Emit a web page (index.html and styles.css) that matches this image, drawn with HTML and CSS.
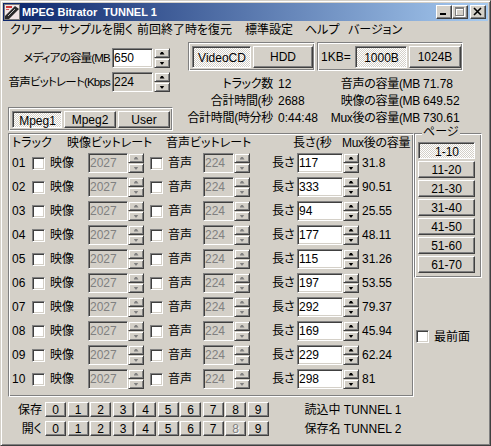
FILE: index.html
```html
<!DOCTYPE html>
<html lang="ja">
<head>
<meta charset="utf-8">
<title>MPEG Bitrator</title>
<link rel="stylesheet" href="styles.css">
</head>
<body>
<div class="window">
  <div class="titlebar">
    <svg class="app-icon" width="16" height="16" viewBox="0 0 16 16">
      <rect x="0.5" y="0.5" width="15" height="15" fill="#f2e6e6" stroke="#7a7a7a"/>
      <rect x="2" y="2" width="6" height="2" fill="#d03838"/>
      <rect x="2" y="5" width="3" height="1" fill="#d86060"/>
      <polygon points="1,12 11,2 15,5 5,15 1,15" fill="#2a2a2a"/>
      <line x1="4" y1="12" x2="11" y2="5" stroke="#bdbdbd" stroke-width="1"/>
    </svg>
    <span class="title">MPEG Bitrator  TUNNEL 1</span>
    <div class="caption-btns">
      <span class="cap"><svg width="14" height="12" viewBox="0 0 14 12"><rect x="3" y="7" width="6" height="2" fill="#000"/></svg></span>
      <span class="cap"><svg width="14" height="12" viewBox="0 0 14 12"><path d="M3 2h9v9h-9z M4 4v6h7v-6z" fill="#fff" fill-rule="evenodd"/><path d="M2 1h9v9h-9z M3 3v6h7v-6z" fill="#808080" fill-rule="evenodd"/></svg></span>
      <span class="cap close"><svg width="14" height="12" viewBox="0 0 14 12"><path d="M3 2 L10 9 M10 2 L3 9" stroke="#000" stroke-width="1.6"/></svg></span>
    </div>
  </div>

  <div class="menubar">
    <span class="m1">クリアー</span>
    <span class="m2">サンプルを開く</span>
    <span class="m3">前回終了時を復元</span>
    <span class="m4">標準設定</span>
    <span class="m5">ヘルプ</span>
    <span class="m6">バージョン</span>
  </div>

  <div class="top">
    <div class="top-left">
      <div class="field">
        <span class="field-label">メディアの容量(MB</span>
        <span class="edit w41">650</span>
        <span class="spin"><i class="up"></i><i class="dn"></i></span>
      </div>
      <div class="field">
        <span class="field-label">音声ビットレート(Kbps</span>
        <span class="edit w41 ro">224</span>
        <span class="spin"><i class="up"></i><i class="dn"></i></span>
      </div>
      <div class="etched mpeg-group">
        <span class="btn on w50">Mpeg1</span>
        <span class="btn w52">Mpeg2</span>
        <span class="btn w52">User</span>
      </div>
    </div>
    <div class="top-right">
      <div class="modes">
        <div class="etched group-vcd">
          <span class="btn on vcd">VideoCD</span>
          <span class="btn hdd">HDD</span>
        </div>
        <div class="etched group-kb">
          <span class="kb-label">1KB=</span>
          <span class="btn on w52">1000B</span>
          <span class="btn w52">1024B</span>
        </div>
      </div>
      <div class="stats">
        <span class="s-label">トラック数</span><span class="s-val">12</span>
        <span class="s-label">音声の容量(MB</span><span class="s-val2">71.78</span>
        <span class="s-label">合計時間(秒</span><span class="s-val">2688</span>
        <span class="s-label">映像の容量(MB</span><span class="s-val2">649.52</span>
        <span class="s-label">合計時間(時分秒</span><span class="s-val">0:44:48</span>
        <span class="s-label">Mux後の容量(MB</span><span class="s-val2">730.61</span>
      </div>
    </div>
  </div>

  <div class="middle">
    <div class="etched tracks">
      <div class="thead">
        <span class="h1">トラック</span>
        <span class="h2">映像ビットレート</span>
        <span class="h3">音声ビットレート</span>
        <span class="h4">長さ(秒</span>
        <span class="h5">Mux後の容量</span>
      </div>
      <div class="trow"><span class="num">01</span><span class="check"></span><span class="lbl-v">映像</span><span class="edit dis w40">2027</span><span class="spin dis"><i class="up"></i><i class="dn"></i></span><span class="check c2"></span><span class="lbl-a">音声</span><span class="edit dis w31">224</span><span class="spin dis"><i class="up"></i><i class="dn"></i></span><span class="lbl-l">長さ</span><span class="edit w46">117</span><span class="spin"><i class="up"></i><i class="dn"></i></span><span class="mux">31.8</span></div>
      <div class="trow"><span class="num">02</span><span class="check"></span><span class="lbl-v">映像</span><span class="edit dis w40">2027</span><span class="spin dis"><i class="up"></i><i class="dn"></i></span><span class="check c2"></span><span class="lbl-a">音声</span><span class="edit dis w31">224</span><span class="spin dis"><i class="up"></i><i class="dn"></i></span><span class="lbl-l">長さ</span><span class="edit w46">333</span><span class="spin"><i class="up"></i><i class="dn"></i></span><span class="mux">90.51</span></div>
      <div class="trow"><span class="num">03</span><span class="check"></span><span class="lbl-v">映像</span><span class="edit dis w40">2027</span><span class="spin dis"><i class="up"></i><i class="dn"></i></span><span class="check c2"></span><span class="lbl-a">音声</span><span class="edit dis w31">224</span><span class="spin dis"><i class="up"></i><i class="dn"></i></span><span class="lbl-l">長さ</span><span class="edit w46">94</span><span class="spin"><i class="up"></i><i class="dn"></i></span><span class="mux">25.55</span></div>
      <div class="trow"><span class="num">04</span><span class="check"></span><span class="lbl-v">映像</span><span class="edit dis w40">2027</span><span class="spin dis"><i class="up"></i><i class="dn"></i></span><span class="check c2"></span><span class="lbl-a">音声</span><span class="edit dis w31">224</span><span class="spin dis"><i class="up"></i><i class="dn"></i></span><span class="lbl-l">長さ</span><span class="edit w46">177</span><span class="spin"><i class="up"></i><i class="dn"></i></span><span class="mux">48.11</span></div>
      <div class="trow"><span class="num">05</span><span class="check"></span><span class="lbl-v">映像</span><span class="edit dis w40">2027</span><span class="spin dis"><i class="up"></i><i class="dn"></i></span><span class="check c2"></span><span class="lbl-a">音声</span><span class="edit dis w31">224</span><span class="spin dis"><i class="up"></i><i class="dn"></i></span><span class="lbl-l">長さ</span><span class="edit w46">115</span><span class="spin"><i class="up"></i><i class="dn"></i></span><span class="mux">31.26</span></div>
      <div class="trow"><span class="num">06</span><span class="check"></span><span class="lbl-v">映像</span><span class="edit dis w40">2027</span><span class="spin dis"><i class="up"></i><i class="dn"></i></span><span class="check c2"></span><span class="lbl-a">音声</span><span class="edit dis w31">224</span><span class="spin dis"><i class="up"></i><i class="dn"></i></span><span class="lbl-l">長さ</span><span class="edit w46">197</span><span class="spin"><i class="up"></i><i class="dn"></i></span><span class="mux">53.55</span></div>
      <div class="trow"><span class="num">07</span><span class="check"></span><span class="lbl-v">映像</span><span class="edit dis w40">2027</span><span class="spin dis"><i class="up"></i><i class="dn"></i></span><span class="check c2"></span><span class="lbl-a">音声</span><span class="edit dis w31">224</span><span class="spin dis"><i class="up"></i><i class="dn"></i></span><span class="lbl-l">長さ</span><span class="edit w46">292</span><span class="spin"><i class="up"></i><i class="dn"></i></span><span class="mux">79.37</span></div>
      <div class="trow"><span class="num">08</span><span class="check"></span><span class="lbl-v">映像</span><span class="edit dis w40">2027</span><span class="spin dis"><i class="up"></i><i class="dn"></i></span><span class="check c2"></span><span class="lbl-a">音声</span><span class="edit dis w31">224</span><span class="spin dis"><i class="up"></i><i class="dn"></i></span><span class="lbl-l">長さ</span><span class="edit w46">169</span><span class="spin"><i class="up"></i><i class="dn"></i></span><span class="mux">45.94</span></div>
      <div class="trow"><span class="num">09</span><span class="check"></span><span class="lbl-v">映像</span><span class="edit dis w40">2027</span><span class="spin dis"><i class="up"></i><i class="dn"></i></span><span class="check c2"></span><span class="lbl-a">音声</span><span class="edit dis w31">224</span><span class="spin dis"><i class="up"></i><i class="dn"></i></span><span class="lbl-l">長さ</span><span class="edit w46">229</span><span class="spin"><i class="up"></i><i class="dn"></i></span><span class="mux">62.24</span></div>
      <div class="trow"><span class="num">10</span><span class="check"></span><span class="lbl-v">映像</span><span class="edit dis w40">2027</span><span class="spin dis"><i class="up"></i><i class="dn"></i></span><span class="check c2"></span><span class="lbl-a">音声</span><span class="edit dis w31">224</span><span class="spin dis"><i class="up"></i><i class="dn"></i></span><span class="lbl-l">長さ</span><span class="edit w46">298</span><span class="spin"><i class="up"></i><i class="dn"></i></span><span class="mux">81</span></div>
    </div>
    <div class="pages-col">
      <div class="etched pages">
        <span class="legend">ページ</span>
        <span class="btn on pg">1-10</span>
        <span class="btn pg">11-20</span>
        <span class="btn pg">21-30</span>
        <span class="btn pg">31-40</span>
        <span class="btn pg">41-50</span>
        <span class="btn pg">51-60</span>
        <span class="btn pg">61-70</span>
      </div>
      <div class="topmost">
        <span class="check"></span>
        <span class="topmost-label">最前面</span>
      </div>
    </div>
  </div>

  <div class="bottom">
    <div class="slot-row">
      <span class="slot-label">保存</span>
      <div class="slot-btns">
        <span class="btn slot">0</span><span class="btn slot">1</span><span class="btn slot">2</span><span class="btn slot">3</span><span class="btn slot">4</span><span class="btn slot">5</span><span class="btn slot">6</span><span class="btn slot">7</span><span class="btn slot">8</span><span class="btn slot">9</span>
      </div>
      <span class="slot-status">読込中 TUNNEL 1</span>
    </div>
    <div class="slot-row">
      <span class="slot-label">開く</span>
      <div class="slot-btns">
        <span class="btn slot">0</span><span class="btn slot">1</span><span class="btn slot">2</span><span class="btn slot">3</span><span class="btn slot">4</span><span class="btn slot">5</span><span class="btn slot">6</span><span class="btn slot">7</span><span class="btn slot disabled">8</span><span class="btn slot">9</span>
      </div>
      <span class="slot-status">保存名 TUNNEL 2</span>
    </div>
  </div>
</div>
</body>
</html>
```

FILE: styles.css
```css
* { box-sizing: border-box; }
html, body { margin: 0; padding: 0; }
body {
  width: 491px;
  height: 446px;
  overflow: hidden;
  background: #d4d0c8;
  font-family: "Liberation Sans", "Noto Sans CJK JP", sans-serif;
  font-size: 12px;
  line-height: 14px;
  font-feature-settings: "palt" 1;
  color: #000;
}

.window {
  width: 491px;
  height: 446px;
  border: 1px solid;
  border-color: #d4d0c8 #404040 #404040 #d4d0c8;
  box-shadow: inset 1px 1px 0 #fff, inset -1px -1px 0 #808080;
  padding: 2px;
  background: #d4d0c8;
  display: flex;
  flex-direction: column;
}

/* title bar */
.titlebar {
  height: 18px;
  flex: none;
  display: flex;
  align-items: center;
  background: linear-gradient(to right, #0a246a, #a6caf0);
  color: #fff;
}
.app-icon { flex: none; margin-left: 1px; }
.title {
  margin-left: 2px;
  font-weight: bold;
  font-size: 11px;
  white-space: pre;
}
.caption-btns { margin-left: auto; margin-right: 2px; display: flex; }
.cap {
  width: 16px;
  height: 14px;
  background: #d4d0c8;
  border: 1px solid;
  border-color: #fff #404040 #404040 #fff;
  box-shadow: inset -1px -1px 0 #808080;
  display: block;
}
.cap svg { display: block; }
.cap.close { margin-left: 2px; }

/* menu */
.menubar {
  height: 18px;
  flex: none;
  display: flex;
  align-items: center;
  padding-left: 7px;
  white-space: nowrap;
}
.menubar span { flex: none; }
.m1 { width: 48px; }
.m2 { width: 79px; }
.m3 { width: 108px; }
.m4 { width: 60px; }
.m5 { width: 43px; }

/* common widgets */
.etched {
  border: 1px solid;
  border-color: #808080 #fff #fff #808080;
  box-shadow: inset 1px 1px 0 #fff, inset -1px -1px 0 #808080;
}
.btn {
  flex: none;
  background: #d4d0c8;
  border: 1px solid;
  border-color: #fff #404040 #404040 #fff;
  box-shadow: inset -1px -1px 0 #808080;
  display: flex;
  align-items: center;
  justify-content: center;
  white-space: nowrap;
}
.btn.on {
  border-color: #808080 #fff #fff #808080;
  box-shadow: inset 1px 1px 0 #404040;
  background: repeating-conic-gradient(#fff 0 25%, #d4d0c8 0 50%) 0 0 / 2px 2px;
  padding: 2px 0 0 1px;
}
.btn.disabled { color: #808080; text-shadow: 1px 1px 0 #fff; }

.edit {
  flex: none;
  height: 20px;
  background: #fff;
  border: 1px solid;
  border-color: #808080 #fff #fff #808080;
  box-shadow: inset 1px 1px 0 #404040, inset -1px -1px 0 #d4d0c8;
  padding-left: 1px;
  display: flex;
  align-items: center;
  white-space: nowrap;
  overflow: hidden;
}
.edit.ro { background: #d4d0c8; }
.edit.dis { background: #d4d0c8; color: #808080; }
.w40 { width: 40px; }
.w41 { width: 41px; }
.w31 { width: 31px; }
.w46 { width: 46px; }
.w50 { width: 50px; }
.w52 { width: 52px; }

.spin {
  flex: none;
  width: 16px;
  height: 20px;
  display: flex;
  flex-direction: column;
}
.spin i {
  flex: 1;
  background: #d4d0c8;
  border: 1px solid;
  border-color: #d4d0c8 #404040 #404040 #d4d0c8;
  box-shadow: inset 1px 1px 0 #fff, inset -1px -1px 0 #808080;
  display: flex;
  align-items: center;
  justify-content: center;
}
.spin i::before {
  content: "";
  width: 5px;
  height: 3px;
  background: #000;
  clip-path: polygon(2px 0, 3px 0, 5px 3px, 0 3px);
}
.spin i.dn::before { clip-path: polygon(0 0, 5px 0, 3px 3px, 2px 3px); }
.spin.dis i::before { background: #808080; }

.check {
  flex: none;
  width: 13px;
  height: 13px;
  background: #fff;
  border: 1px solid;
  border-color: #808080 #fff #fff #808080;
  box-shadow: inset 1px 1px 0 #404040, inset -1px -1px 0 #d4d0c8;
}

/* top section */
.top {
  height: 92px;
  flex: none;
  display: flex;
  padding-left: 5px;
}
.top-left {
  width: 165px;
  flex: none;
  padding-top: 9px;
  display: flex;
  flex-direction: column;
}
.field { display: flex; align-items: center; height: 20px; }
.field + .field { margin-top: 4px; }
.field-label {
  width: 102px;
  margin-right: 2px;
  display: flex;
  justify-content: flex-end;
  white-space: nowrap;
  font-size: 11.5px;
  letter-spacing: -0.8px;
}
.field .spin { margin-left: 1px; }
.mpeg-group {
  margin-top: 15px;
  height: 24px;
  padding: 3px 2px 2px 3px;
  display: flex;
  gap: 2px;
}
.mpeg-group .btn { height: 17px; }

.top-right {
  margin-left: 7px;
  padding-top: 3px;
  display: flex;
  flex-direction: column;
}
.modes { display: flex; gap: 2px; padding-left: 8px; }
.group-vcd {
  width: 127px;
  height: 29px;
  padding: 3px 1px 2px 3px;
  display: flex;
  gap: 2px;
}
.group-vcd .btn { height: 22px; }
.vcd { width: 59px; }
.hdd { width: 60px; }
.group-kb {
  width: 146px;
  height: 29px;
  padding: 3px 1px 2px 3px;
  display: flex;
  align-items: center;
  gap: 2px;
}
.group-kb .btn { height: 22px; }
.kb-label { width: 32px; flex: none; }

.stats {
  margin-top: 4px;
  display: grid;
  grid-template-columns: 93px 55px 92px auto;
  grid-auto-rows: 17px;
  align-items: center;
  white-space: nowrap;
}
.s-label { display: flex; justify-content: flex-end; letter-spacing: -0.3px; }
.s-val { padding-left: 5px; }
.s-val2 { padding-left: 3px; }

/* middle section */
.middle {
  margin-top: 2px;
  height: 264px;
  flex: none;
  display: flex;
  padding-left: 5px;
}
.tracks {
  width: 406px;
  height: 264px;
  flex: none;
  padding: 1px 1px 5px 1px;
  display: flex;
  flex-direction: column;
}
.thead {
  height: 16px;
  display: flex;
  align-items: center;
  padding-left: 2px;
  white-space: nowrap;
}
.thead span { flex: none; }
.h1 { width: 55px; }
.h2 { width: 99px; }
.h3 { width: 127px; }
.h4 { width: 49px; }
.h5 { letter-spacing: -0.3px; }

.trow {
  height: 24px;
  display: flex;
  align-items: center;
  padding-left: 2px;
  white-space: nowrap;
}
.num { width: 20px; flex: none; }
.lbl-v { width: 38px; margin-left: 5px; flex: none; }
.c2 { margin-left: 6px; }
.lbl-a { width: 35px; margin-left: 5px; flex: none; }
.lbl-l { width: 25px; margin-left: 22px; flex: none; }
.mux { margin-left: 3px; }

.pages-col {
  width: 68px;
  flex: none;
  display: flex;
  flex-direction: column;
}
.pages {
  position: relative;
  height: 145px;
  padding: 8px 6px 4px 3px;
  display: flex;
  flex-direction: column;
  gap: 2px;
}
.pg { width: 57px; height: 17px; }
.legend {
  position: absolute;
  top: -8px;
  left: 7px;
  padding: 0 1px;
  line-height: 13px;
  background: #d4d0c8;
}
.topmost {
  margin-top: 52px;
  height: 13px;
  display: flex;
  align-items: center;
}
.topmost .check { margin-left: 2px; }
.topmost-label { margin-left: 5px; white-space: nowrap; }

/* bottom section */
.bottom {
  flex: 1;
  padding: 5px 0 0 5px;
  display: flex;
  flex-direction: column;
  gap: 4px;
}
.slot-row { display: flex; align-items: center; height: 15px; }
.slot-label {
  width: 34px;
  margin-right: 3px;
  flex: none;
  display: flex;
  justify-content: flex-end;
}
.slot-btns { display: flex; gap: 1.5px; }
.slot { width: 21px; height: 15px; }
.slot-status { margin-left: 36px; white-space: nowrap; }
```
